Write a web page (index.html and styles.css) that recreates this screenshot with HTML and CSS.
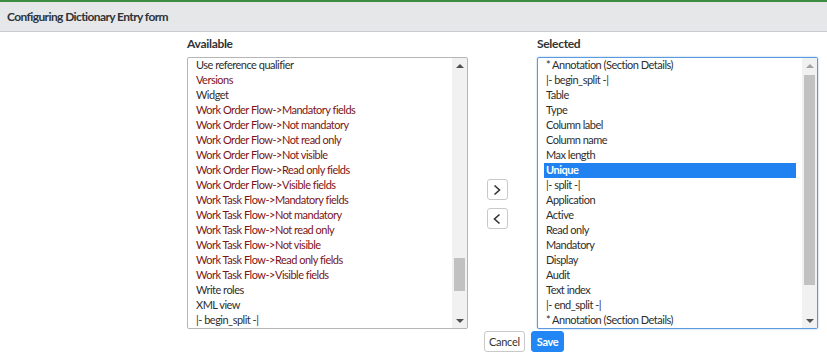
FILE: index.html
```html
<!DOCTYPE html>
<html>
<head>
<meta charset="utf-8">
<link rel="stylesheet" href="styles.css">
</head>
<body>
<div class="topbar">Configuring Dictionary Entry form</div>
<div class="form">
  <div class="slush">
    <div class="col">
      <div class="label">Available</div>
      <div class="list">
        <div class="items">
          <div class="opt">Use reference qualifier</div>
          <div class="opt red">Versions</div>
          <div class="opt">Widget</div>
          <div class="opt red">Work Order Flow-&gt;Mandatory fields</div>
          <div class="opt red">Work Order Flow-&gt;Not mandatory</div>
          <div class="opt red">Work Order Flow-&gt;Not read only</div>
          <div class="opt red">Work Order Flow-&gt;Not visible</div>
          <div class="opt red">Work Order Flow-&gt;Read only fields</div>
          <div class="opt red">Work Order Flow-&gt;Visible fields</div>
          <div class="opt red">Work Task Flow-&gt;Mandatory fields</div>
          <div class="opt red">Work Task Flow-&gt;Not mandatory</div>
          <div class="opt red">Work Task Flow-&gt;Not read only</div>
          <div class="opt red">Work Task Flow-&gt;Not visible</div>
          <div class="opt red">Work Task Flow-&gt;Read only fields</div>
          <div class="opt red">Work Task Flow-&gt;Visible fields</div>
          <div class="opt">Write roles</div>
          <div class="opt">XML view</div>
          <div class="opt">|- begin_split -|</div>
        </div>
        <div class="sbar">
          <div class="sbtn"><span class="up"></span></div>
          <div class="track"><div class="thumb" style="margin-top:185px;height:33px"></div></div>
          <div class="sbtn"><span class="down"></span></div>
        </div>
      </div>
    </div>
    <div class="mid">
      <button class="arrow" aria-label="Add"><svg width="10" height="12" viewBox="0 0 10 12"><path d="M2.5 1.5 L7.5 6 L2.5 10.5" fill="none" stroke="#333" stroke-width="1.6"/></svg></button>
      <button class="arrow" aria-label="Remove"><svg width="10" height="12" viewBox="0 0 10 12"><path d="M7.5 1.5 L2.5 6 L7.5 10.5" fill="none" stroke="#333" stroke-width="1.6"/></svg></button>
    </div>
    <div class="col">
      <div class="label">Selected</div>
      <div class="list focus">
        <div class="items">
          <div class="opt">* Annotation (Section Details)</div>
          <div class="opt">|- begin_split -|</div>
          <div class="opt">Table</div>
          <div class="opt">Type</div>
          <div class="opt">Column label</div>
          <div class="opt">Column name</div>
          <div class="opt">Max length</div>
          <div class="opt sel">Unique</div>
          <div class="opt">|- split -|</div>
          <div class="opt">Application</div>
          <div class="opt">Active</div>
          <div class="opt">Read only</div>
          <div class="opt">Mandatory</div>
          <div class="opt">Display</div>
          <div class="opt">Audit</div>
          <div class="opt">Text index</div>
          <div class="opt">|- end_split -|</div>
          <div class="opt">* Annotation (Section Details)</div>
        </div>
        <div class="sbar">
          <div class="sbtn"><span class="up light"></span></div>
          <div class="track"><div class="thumb" style="margin-top:2px;height:210px"></div></div>
          <div class="sbtn"><span class="down"></span></div>
        </div>
      </div>
    </div>
  </div>
  <div class="actions">
    <button class="btn">Cancel</button>
    <button class="btn primary">Save</button>
  </div>
</div>
</body>
</html>
```
FILE: styles.css
```css
* { box-sizing: border-box; }
html, body { margin: 0; padding: 0; background: #fff; }
body {
  font-family: "Lato", "Open Sans", sans-serif;
  color: #2e2e2e;
  font-size: 11px;
  letter-spacing: -0.5px;
}
.topbar {
  border-top: 2px solid #3d8c40;
  background: #e5e7e9;
  border-bottom: 1px solid #c8ccd0;
  height: 32px;
  padding: 0 7px;
  display: flex;
  align-items: center;
  font-size: 12px;
  font-weight: 700;
  letter-spacing: -0.6px;
  color: #2f3438;
}
.form { padding: 5px 0 0 187px; }
.slush { display: flex; align-items: flex-start; }
.col { width: 281px; }
.label {
  font-size: 12px;
  font-weight: 700;
  letter-spacing: -0.3px;
  color: #333;
  height: 14px;
  line-height: 14px;
  margin-bottom: 6px;
}
.list {
  height: 272px;
  border: 1px solid #b5b5b5;
  border-radius: 2px;
  display: flex;
  overflow: hidden;
  background: #fff;
}
.list.focus {
  border-color: #5a9be0;
  box-shadow: 0 0 2px rgba(70, 140, 220, 0.6);
}
.items { flex: 1; padding: 0 6px; overflow: hidden; }
.opt {
  height: 15px;
  line-height: 14px;
  padding: 0 2px;
  white-space: nowrap;
  color: #2e2e2e;
}
.opt.red { color: #7b1416; }
.opt.sel { background: #1f82f0; color: #fff; font-weight: 700; }
.sbar {
  width: 15px;
  display: flex;
  flex-direction: column;
  background: #f1f1f1;
}
.sbtn {
  height: 15px;
  display: flex;
  align-items: center;
  justify-content: center;
}
.up, .down { width: 0; height: 0; border-left: 4px solid transparent; border-right: 4px solid transparent; }
.up { border-bottom: 4px solid #505050; }
.up.light { border-bottom-color: #a3a3a3; }
.down { border-top: 4px solid #505050; }
.track { flex: 1; padding: 0 2px; }
.thumb { background: #c1c1c1; }
.mid {
  width: 69px;
  display: flex;
  flex-direction: column;
  align-items: center;
  gap: 8px;
  padding-top: 142px;
  padding-right: 11px;
}
.arrow {
  width: 21px;
  height: 21px;
  padding: 0;
  border: 1px solid #c9c9c9;
  border-radius: 3px;
  background: #fff;
  display: flex;
  align-items: center;
  justify-content: center;
}
.actions {
  display: flex;
  gap: 6px;
  padding-left: 297px;
  margin-top: 2px;
}
.btn {
  font-family: inherit;
  font-size: 11px;
  letter-spacing: -0.3px;
  height: 21px;
  padding: 0 4px;
  border: 1px solid #c9c9c9;
  border-radius: 3px;
  background: #fff;
  color: #333;
}
.btn.primary {
  background: #2287f5;
  border-color: #2287f5;
  color: #fff;
  font-weight: 700;
  padding: 0 5px;
}
```
